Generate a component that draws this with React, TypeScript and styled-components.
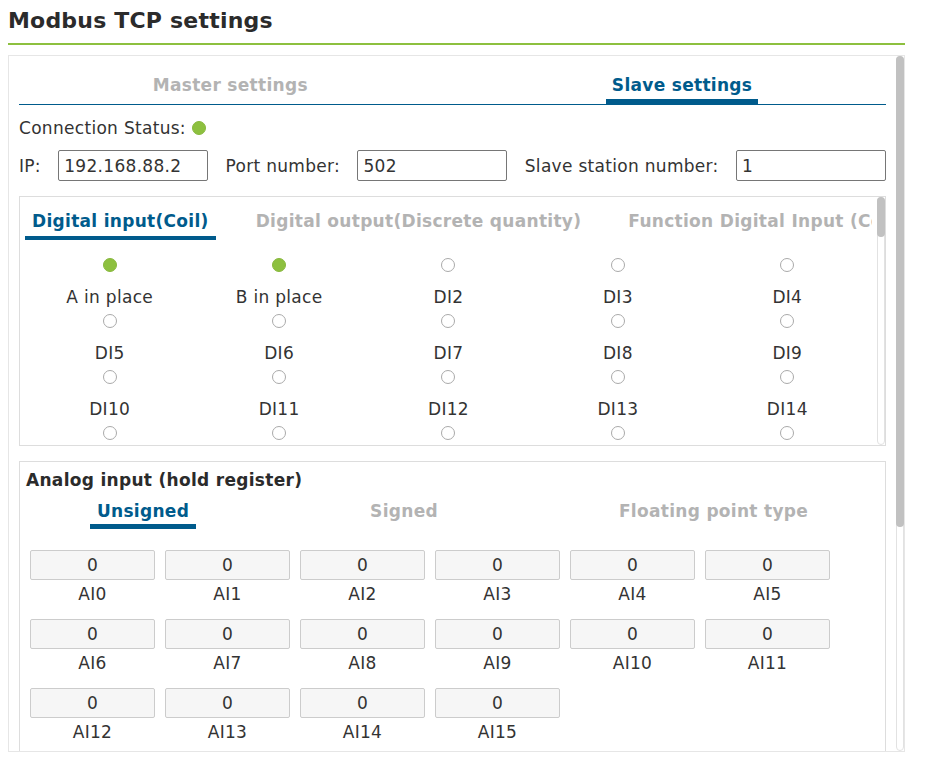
import React from 'react';
import styled, { createGlobalStyle } from 'styled-components';

const GlobalStyle = createGlobalStyle`
  html, body { padding: 0; background: #fff; }
  body {
    margin: 8px;
    font-family: "DejaVu Sans", Verdana, sans-serif;
    font-size: 17px;
    letter-spacing: 0.3px;
    color: #333;
  }
  * { box-sizing: border-box; }
`;

const BLUE = '#005b8c';
const GREEN = '#8dc03f';
const GREY_TAB = '#b3b3b3';

const Page = styled.div`
  width: 897px;
`;

const Title = styled.h1`
  margin: 0;
  font-size: 22px;
  line-height: 26px;
  font-weight: bold;
  letter-spacing: 0.2px;
  color: #2b2b2b;
  padding-bottom: 9px;
  border-bottom: 2px solid ${GREEN};
`;

/* A scroll area: a clipped body beside a drawn scrollbar track */
const ScrollFrame = styled.div<{ $height: number }>`
  display: flex;
  height: ${(p) => p.$height}px;
  overflow: hidden;
`;

const Track = styled.div`
  flex: 0 0 8px;
  display: flex;
  flex-direction: column;
  border: 1px solid #e2e2e2;
  border-radius: 4px;
  background: #fff;
`;

const Thumb = styled.div<{ $size: number }>`
  height: ${(p) => p.$size}px;
  margin: -1px -1px 0;
  border-radius: 4px;
  background: #c1c1c1;
`;

const Panel = styled(ScrollFrame)`
  margin-top: 10px;
  border: 1px solid #e6e6e6;
`;

const PanelBody = styled.div`
  flex: 1;
  min-width: 0;
  padding: 10px;
  overflow: hidden;
`;

const MainTabs = styled.div`
  display: flex;
  justify-content: center;
  gap: 292px;
  border-bottom: 1px solid ${BLUE};
`;

const MainTab = styled.div<{ $active?: boolean }>`
  padding: 7px 6px 2px;
  line-height: 24px;
  font-weight: bold;
  white-space: nowrap;
  color: ${(p) => (p.$active ? BLUE : GREY_TAB)};
  border-bottom: 5px solid ${(p) => (p.$active ? BLUE : 'transparent')};
`;

const StatusRow = styled.div`
  margin-top: 11px;
  display: flex;
  align-items: center;
  gap: 6px;
  line-height: 24px;
`;

const Dot = styled.span<{ $on?: boolean }>`
  display: inline-block;
  flex-shrink: 0;
  width: 14px;
  height: 14px;
  border-radius: 50%;
  background: ${(p) => (p.$on ? GREEN : '#fff')};
  border: 1px solid ${(p) => (p.$on ? '#88b83d' : '#aaa')};
`;

const FieldRow = styled.div`
  margin-top: 10px;
  display: flex;
  align-items: center;
  justify-content: space-between;
  line-height: 24px;
`;

const Label = styled.span`
  white-space: nowrap;
`;

const TextInput = styled.input`
  width: 150px;
  height: 31px;
  border: 1px solid #767676;
  border-radius: 2px;
  padding: 0 5px;
  font-family: inherit;
  font-size: 17px;
  letter-spacing: 0.3px;
  color: #333;
  background: #fff;
  outline: none;
`;

const DigitalBox = styled(ScrollFrame)`
  margin-top: 15px;
  border: 1px solid #ddd;
`;

const DigitalBody = styled.div`
  flex: 1;
  min-width: 0;
  padding: 12px 5px 0;
  overflow: hidden;
`;

const SubTabs = styled.div`
  display: flex;
  gap: 33px;
  overflow: hidden;
`;

const SubTab = styled.div<{ $active?: boolean }>`
  flex-shrink: 0;
  white-space: nowrap;
  padding: 0 7px 3px;
  line-height: 24px;
  font-weight: bold;
  color: ${(p) => (p.$active ? BLUE : GREY_TAB)};
  border-bottom: 4px solid ${(p) => (p.$active ? BLUE : 'transparent')};
`;

const RadioGrid = styled.div`
  margin-top: 18px;
  display: grid;
  grid-template-columns: repeat(5, 1fr);
`;

const RadioItem = styled.div`
  display: flex;
  flex-direction: column;
  align-items: center;
  padding-bottom: 5px;
`;

const RadioLabel = styled.div`
  margin-top: 13px;
  line-height: 24px;
  white-space: nowrap;
`;

const AnalogBox = styled.div`
  margin-top: 15px;
  border: 1px solid #ddd;
  padding: 6px;
`;

const SectionTitle = styled.div`
  line-height: 24px;
  font-weight: bold;
  color: #2b2b2b;
`;

const TypeTabs = styled.div`
  display: flex;
  justify-content: center;
  gap: 167px;
`;

const TypeTab = styled.div<{ $active?: boolean }>`
  padding: 7px 7px 1px;
  line-height: 24px;
  font-weight: bold;
  white-space: nowrap;
  color: ${(p) => (p.$active ? BLUE : GREY_TAB)};
  border-bottom: 5px solid ${(p) => (p.$active ? BLUE : 'transparent')};
`;

const ValueGrid = styled.div`
  margin-top: 21px;
  padding: 0 4px;
  display: flex;
  flex-wrap: wrap;
  column-gap: 10px;
`;

const ValueItem = styled.div`
  width: 125px;
  margin-bottom: 11px;
  text-align: center;
`;

const ValueBox = styled.div`
  height: 30px;
  line-height: 28px;
  border: 1px solid #ccc;
  border-radius: 2px;
  background: #f6f6f6;
`;

const ValueLabel = styled.div`
  line-height: 28px;
`;

const digitalLabels = Array.from({ length: 20 }, (_, i) =>
  i === 0 ? 'A in place' : i === 1 ? 'B in place' : `DI${i}`
);

const aiLabels = Array.from({ length: 16 }, (_, i) => `AI${i}`);

export default function App() {
  return (
    <>
      <GlobalStyle />
      <Page>
        <Title>Modbus TCP settings</Title>
        <Panel $height={697}>
          <PanelBody>
            <MainTabs>
              <MainTab>Master settings</MainTab>
              <MainTab $active>Slave settings</MainTab>
            </MainTabs>
            <StatusRow>
              <Label>Connection Status:</Label>
              <Dot $on />
            </StatusRow>
            <FieldRow>
              <Label>IP:</Label>
              <TextInput defaultValue="192.168.88.2" />
              <Label>Port number:</Label>
              <TextInput defaultValue="502" />
              <Label>Slave station number:</Label>
              <TextInput defaultValue="1" />
            </FieldRow>
            <DigitalBox $height={250}>
              <DigitalBody>
                <SubTabs>
                  <SubTab $active>Digital input(Coil)</SubTab>
                  <SubTab>Digital output(Discrete quantity)</SubTab>
                  <SubTab>Function Digital Input (Coil)</SubTab>
                </SubTabs>
                <RadioGrid>
                  {digitalLabels.map((l, i) => (
                    <RadioItem key={l}>
                      <Dot $on={i < 2} />
                      <RadioLabel>{l}</RadioLabel>
                    </RadioItem>
                  ))}
                </RadioGrid>
              </DigitalBody>
              <Track>
                <Thumb $size={40} />
              </Track>
            </DigitalBox>
            <AnalogBox>
              <SectionTitle>Analog input (hold register)</SectionTitle>
              <TypeTabs>
                <TypeTab $active>Unsigned</TypeTab>
                <TypeTab>Signed</TypeTab>
                <TypeTab>Floating point type</TypeTab>
              </TypeTabs>
              <ValueGrid>
                {aiLabels.map((l) => (
                  <ValueItem key={l}>
                    <ValueBox>0</ValueBox>
                    <ValueLabel>{l}</ValueLabel>
                  </ValueItem>
                ))}
              </ValueGrid>
            </AnalogBox>
          </PanelBody>
          <Track>
            <Thumb $size={471} />
          </Track>
        </Panel>
      </Page>
    </>
  );
}
